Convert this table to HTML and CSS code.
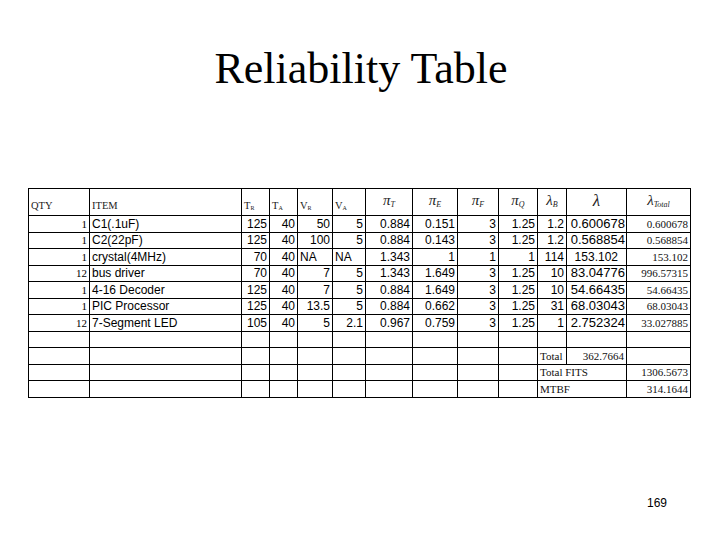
FILE: index.html
```html
<!DOCTYPE html>
<html>
<head>
<meta charset="utf-8">
<link rel="stylesheet" href="styles.css">
</head>
<body>
<div class="slide">
  <h1 class="title">Reliability Table</h1>
  <div class="table-wrap">
    <table class="rel">
      <colgroup>
        <col style="width:61px"><col style="width:152px"><col style="width:28px"><col style="width:28px">
        <col style="width:35px"><col style="width:33px"><col style="width:47px"><col style="width:45px">
        <col style="width:41px"><col style="width:39px"><col style="width:29px"><col style="width:60px">
        <col style="width:64px">
      </colgroup>
      <thead>
        <tr class="head">
          <th class="hl">QTY</th>
          <th class="hl">ITEM</th>
          <th class="hl">T<sub>R</sub></th>
          <th class="hl">T<sub>A</sub></th>
          <th class="hl">V<sub>R</sub></th>
          <th class="hl">V<sub>A</sub></th>
          <th class="hg"><i>π</i><sub><i>T</i></sub></th>
          <th class="hg"><i>π</i><sub><i>E</i></sub></th>
          <th class="hg"><i>π</i><sub><i>F</i></sub></th>
          <th class="hg"><i>π</i><sub><i>Q</i></sub></th>
          <th class="hg"><i>λ</i><sub><i>B</i></sub></th>
          <th class="hg big"><i>λ</i></th>
          <th class="hg"><i>λ</i><sub><i>Total</i></sub></th>
        </tr>
      </thead>
      <tbody>
        <tr><td class="q">1</td><td class="t">C1(.1uF)</td><td class="n">125</td><td class="n">40</td><td class="n">50</td><td class="n">5</td><td class="n">0.884</td><td class="n">0.151</td><td class="n">3</td><td class="n">1.25</td><td class="n">1.2</td><td class="n l">0.600678</td><td class="s">0.600678</td></tr>
        <tr><td class="q">1</td><td class="t">C2(22pF)</td><td class="n">125</td><td class="n">40</td><td class="n">100</td><td class="n">5</td><td class="n">0.884</td><td class="n">0.143</td><td class="n">3</td><td class="n">1.25</td><td class="n">1.2</td><td class="n l">0.568854</td><td class="s">0.568854</td></tr>
        <tr><td class="q">1</td><td class="t">crystal(4MHz)</td><td class="n">70</td><td class="n">40</td><td class="t">NA</td><td class="t">NA</td><td class="n">1.343</td><td class="n">1</td><td class="n">1</td><td class="n">1</td><td class="n">114</td><td class="n l2">153.102</td><td class="s">153.102</td></tr>
        <tr><td class="q">12</td><td class="t">bus driver</td><td class="n">70</td><td class="n">40</td><td class="n">7</td><td class="n">5</td><td class="n">1.343</td><td class="n">1.649</td><td class="n">3</td><td class="n">1.25</td><td class="n">10</td><td class="n l">83.04776</td><td class="s">996.57315</td></tr>
        <tr><td class="q">1</td><td class="t">4-16 Decoder</td><td class="n">125</td><td class="n">40</td><td class="n">7</td><td class="n">5</td><td class="n">0.884</td><td class="n">1.649</td><td class="n">3</td><td class="n">1.25</td><td class="n">10</td><td class="n l">54.66435</td><td class="s">54.66435</td></tr>
        <tr><td class="q">1</td><td class="t">PIC Processor</td><td class="n">125</td><td class="n">40</td><td class="n">13.5</td><td class="n">5</td><td class="n">0.884</td><td class="n">0.662</td><td class="n">3</td><td class="n">1.25</td><td class="n">31</td><td class="n l">68.03043</td><td class="s">68.03043</td></tr>
        <tr><td class="q">12</td><td class="t">7-Segment LED</td><td class="n">105</td><td class="n">40</td><td class="n">5</td><td class="n">2.1</td><td class="n">0.967</td><td class="n">0.759</td><td class="n">3</td><td class="n">1.25</td><td class="n">1</td><td class="n l">2.752324</td><td class="s">33.027885</td></tr>
        <tr><td></td><td></td><td></td><td></td><td></td><td></td><td></td><td></td><td></td><td></td><td></td><td></td><td></td></tr>
        <tr><td></td><td></td><td></td><td></td><td></td><td></td><td></td><td></td><td></td><td></td><td class="sl">Total</td><td class="s">362.7664</td><td></td></tr>
        <tr><td></td><td></td><td></td><td></td><td></td><td></td><td></td><td></td><td></td><td></td><td class="sl" colspan="2">Total FITS</td><td class="s">1306.5673</td></tr>
        <tr><td></td><td></td><td></td><td></td><td></td><td></td><td></td><td></td><td></td><td></td><td class="sl" colspan="2">MTBF</td><td class="s">314.1644</td></tr>
      </tbody>
    </table>
  </div>
  <div class="footer"><span class="pageno">169</span></div>
</div>
</body>
</html>
```
FILE: styles.css
```css
html, body {
  margin: 0;
  padding: 0;
  background: #fff;
}
.slide {
  width: 720px;
  height: 540px;
  position: relative;
  overflow: hidden;
  display: flex;
  flex-direction: column;
}
.title {
  margin: 45px 0 0 0;
  height: 48px;
  font-family: "Liberation Serif", "Times New Roman", serif;
  font-weight: normal;
  font-size: 44px;
  line-height: 48px;
  text-align: center;
  color: #000;
  padding-left: 2px;
}
.table-wrap {
  margin: 95px 0 0 28px;
}
.rel {
  border-collapse: collapse;
  table-layout: fixed;
  width: 662px;
  border: 1px solid #000;
}
.rel td, .rel th {
  border: 1px solid #000;
  padding: 0;
  overflow: hidden;
  white-space: nowrap;
}
.rel tbody tr {
  height: 16.5px;
}
.head {
  height: 27px;
}
.hl {
  font-family: "Liberation Serif", "Times New Roman", serif;
  font-weight: normal;
  font-size: 10.5px;
  text-align: left;
  vertical-align: bottom;
  padding: 0 0 4px 2px !important;
  color: #222;
}
.hl sub {
  font-size: 6px;
  vertical-align: -1px;
}
.hg {
  font-family: "Liberation Serif", "Times New Roman", serif;
  font-weight: normal;
  font-size: 15px;
  text-align: center;
  vertical-align: middle;
  padding-bottom: 3px !important;
  color: #222;
}
.hg sub {
  font-size: 8px;
  vertical-align: -2px;
}
.hg.big {
  font-size: 17px;
}
.rel td {
  font-family: "Liberation Sans", Arial, sans-serif;
  font-size: 12px;
  line-height: 14px;
  color: #000;
  vertical-align: middle;
}
.rel td.n {
  text-align: right;
  padding-right: 2px;
}
.rel td.t {
  text-align: left;
  padding-left: 2px;
}
.rel td.l {
  font-size: 13px;
  padding-right: 1px;
}
.rel td.l2 {
  padding-right: 8px;
}
.rel td.q {
  font-family: "Liberation Serif", "Times New Roman", serif;
  font-size: 11px;
  text-align: right;
  padding-right: 2px;
}
.rel td.s {
  font-family: "Liberation Serif", "Times New Roman", serif;
  font-size: 11px;
  text-align: right;
  padding-right: 2px;
  color: #111;
}
.rel td.sl {
  font-family: "Liberation Serif", "Times New Roman", serif;
  font-size: 11px;
  text-align: left;
  padding-left: 2px;
  color: #111;
}
.footer {
  margin-top: auto;
  display: flex;
  justify-content: flex-end;
  padding: 0 53px 30px 0;
}
.pageno {
  font-family: "Liberation Sans", Arial, sans-serif;
  font-size: 12px;
  color: #000;
}
```
